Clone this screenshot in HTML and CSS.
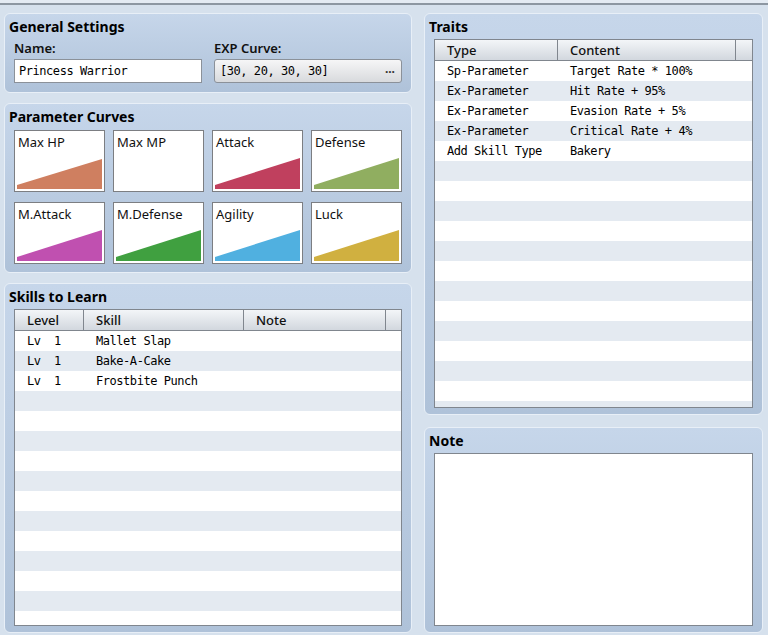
FILE: index.html
```html
<!DOCTYPE html>
<html lang="en">
<head>
    <meta charset="UTF-8">
    <meta name="viewport" content="width=device-width, initial-scale=1.0">
    <title>Class Editor</title>
    <link rel="stylesheet" href="styles.css">
</head>
<body>
    <div class="topbar"></div>

    <div class="editor">
        <!-- Left column -->
        <div class="column left">
            <div class="panel general">
                <h2>General Settings</h2>
                <div class="field-row">
                    <div class="field">
                        <label>Name:</label>
                        <input type="text" class="text-input" value="Princess Warrior">
                    </div>
                    <div class="field">
                        <label>EXP Curve:</label>
                        <button class="picker"><span>[30, 20, 30, 30]</span><span class="dots">...</span></button>
                    </div>
                </div>
            </div>

            <div class="panel curves">
                <h2>Parameter Curves</h2>
                <div class="curve-grid">
                    <div class="curve">
                        <span>Max HP</span>
                        <svg viewBox="0 0 85 31"><polygon points="0,31 0,27 85,1 85,31" fill="#cf7f60"/></svg>
                    </div>
                    <div class="curve">
                        <span>Max MP</span>
                    </div>
                    <div class="curve">
                        <span>Attack</span>
                        <svg viewBox="0 0 85 31"><polygon points="0,31 0,27 85,0 85,31" fill="#c0405e"/></svg>
                    </div>
                    <div class="curve">
                        <span>Defense</span>
                        <svg viewBox="0 0 85 31"><polygon points="0,31 0,27 85,0 85,31" fill="#90ae60"/></svg>
                    </div>
                    <div class="curve">
                        <span>M.Attack</span>
                        <svg viewBox="0 0 85 31"><polygon points="0,31 0,27 85,0 85,31" fill="#c050b0"/></svg>
                    </div>
                    <div class="curve">
                        <span>M.Defense</span>
                        <svg viewBox="0 0 85 31"><polygon points="0,31 0,27 85,0 85,31" fill="#40a040"/></svg>
                    </div>
                    <div class="curve">
                        <span>Agility</span>
                        <svg viewBox="0 0 85 31"><polygon points="0,31 0,27 85,0 85,31" fill="#50b0e0"/></svg>
                    </div>
                    <div class="curve">
                        <span>Luck</span>
                        <svg viewBox="0 0 85 31"><polygon points="0,31 0,27 85,0 85,31" fill="#d0b040"/></svg>
                    </div>
                </div>
            </div>

            <div class="panel skills">
                <h2>Skills to Learn</h2>
                <div class="list skill-list">
                    <div class="list-head">
                        <div>Level</div>
                        <div>Skill</div>
                        <div>Note</div>
                        <div></div>
                    </div>
                    <div class="list-body">
                        <div class="list-row"><div>Lv  1</div><div>Mallet Slap</div><div></div></div>
                        <div class="list-row"><div>Lv  1</div><div>Bake-A-Cake</div><div></div></div>
                        <div class="list-row"><div>Lv  1</div><div>Frostbite Punch</div><div></div></div>
                    </div>
                </div>
            </div>
        </div>

        <!-- Right column -->
        <div class="column right">
            <div class="panel traits">
                <h2>Traits</h2>
                <div class="list trait-list">
                    <div class="list-head">
                        <div>Type</div>
                        <div>Content</div>
                        <div></div>
                    </div>
                    <div class="list-body">
                        <div class="list-row"><div>Sp-Parameter</div><div>Target Rate * 100%</div></div>
                        <div class="list-row"><div>Ex-Parameter</div><div>Hit Rate + 95%</div></div>
                        <div class="list-row"><div>Ex-Parameter</div><div>Evasion Rate + 5%</div></div>
                        <div class="list-row"><div>Ex-Parameter</div><div>Critical Rate + 4%</div></div>
                        <div class="list-row"><div>Add Skill Type</div><div>Bakery</div></div>
                    </div>
                </div>
            </div>

            <div class="panel note">
                <h2>Note</h2>
                <textarea class="note-box"></textarea>
            </div>
        </div>
    </div>
</body>
</html>
```

FILE: styles.css
```css
body {
    margin: 0;
    background-color: #d6e1ed;
    font-family: "Noto Sans", "DejaVu Sans", sans-serif;
    font-size: 13px;
    color: #111;
    overflow: hidden;
}
.topbar {
    height: 3px;
    background-color: #e4ebf3;
    border-bottom: 2px solid #8d97a2;
}
.editor {
    display: flex;
    gap: 12px;
    padding: 8px 0 0 4px;
}
.column {
    display: flex;
    flex-direction: column;
    gap: 10px;
}
.column.left {
    width: 408px;
}
.column.right {
    width: 339px;
    gap: 12px;
}
.panel {
    display: flex;
    flex-direction: column;
    box-sizing: border-box;
    background: linear-gradient(#c6d6ea, #afc2d9);
    border: 1px solid #e8eff7;
    border-radius: 6px;
    padding: 3px 9px 6px 9px;
}
.panel h2 {
    margin: 0 0 0 -5px;
    font-size: 14px;
    font-weight: bold;
    line-height: 20px;
    color: #000;
}
.general { height: 80px; }
.curves { height: 170px; }
.skills { height: 350px; }
.traits { height: 402px; }
.note { height: 206px; }

/* General settings */
.field-row {
    display: grid;
    grid-template-columns: 188px 188px;
    gap: 12px;
}
.field label {
    display: block;
    margin-top: 2px;
    line-height: 18px;
    font-weight: 600;
}
.text-input, .picker {
    box-sizing: border-box;
    width: 100%;
    height: 24px;
    margin-top: 2px;
    border: 1px solid #8b9199;
    font-family: "DejaVu Sans Mono", monospace;
    font-size: 12px;
    letter-spacing: -0.45px;
    color: #000;
}
.text-input {
    padding: 0 4px;
    background-color: #fff;
}
.picker {
    display: flex;
    align-items: center;
    justify-content: space-between;
    padding: 0 6px 0 5px;
    border-radius: 3px;
    background: linear-gradient(#f6f6f7, #d8dadd);
}
.picker .dots {
    font-family: "Noto Sans", sans-serif;
    font-size: 12px;
    font-weight: bold;
    letter-spacing: 0;
    line-height: 12px;
    margin-top: -4px;
    color: #333;
}

/* Parameter curves */
.curve-grid {
    display: grid;
    grid-template-columns: repeat(4, 91px);
    grid-auto-rows: 62px;
    column-gap: 8px;
    row-gap: 10px;
    margin-top: 3px;
}
.curve {
    display: flex;
    flex-direction: column;
    justify-content: space-between;
    box-sizing: border-box;
    border: 1px solid #7c7e82;
    background-color: #fff;
    padding: 2px;
}
.curve span {
    line-height: 18px;
    padding-left: 1px;
}
.curve svg {
    display: block;
    width: 85px;
    height: 31px;
}

/* Lists */
.list {
    flex: 1;
    display: flex;
    flex-direction: column;
    margin-top: 2px;
    border: 1px solid #80868e;
    background-color: #fff;
    font-family: "DejaVu Sans Mono", monospace;
    font-size: 12px;
    letter-spacing: -0.45px;
    color: #000;
}
.list-head {
    display: grid;
    height: 20px;
    border-bottom: 1px solid #80868e;
    background: linear-gradient(#f3f5f8, #d2d7de);
    font-family: "Noto Sans", sans-serif;
    font-size: 13px;
    font-weight: 500;
    letter-spacing: 0;
    line-height: 20px;
    color: #111;
}
.list-head div {
    padding-left: 12px;
    border-right: 1px solid #80868e;
}
.list-head div:last-child {
    border-right: none;
}
.list-body {
    flex: 1;
    background: repeating-linear-gradient(#fff 0 20px, #e4eaf1 20px 40px);
}
.list-row {
    display: grid;
    height: 20px;
    line-height: 20px;
}
.list-row div {
    padding-left: 12px;
    white-space: pre;
}
.skill-list .list-head,
.skill-list .list-row {
    grid-template-columns: 69px 160px 142px 1fr;
}
.trait-list .list-head,
.trait-list .list-row {
    grid-template-columns: 123px 178px 1fr;
}

/* Note */
.note-box {
    flex: 1;
    margin-top: 2px;
    border: 1px solid #80868e;
    background-color: #fff;
    resize: none;
}
```
